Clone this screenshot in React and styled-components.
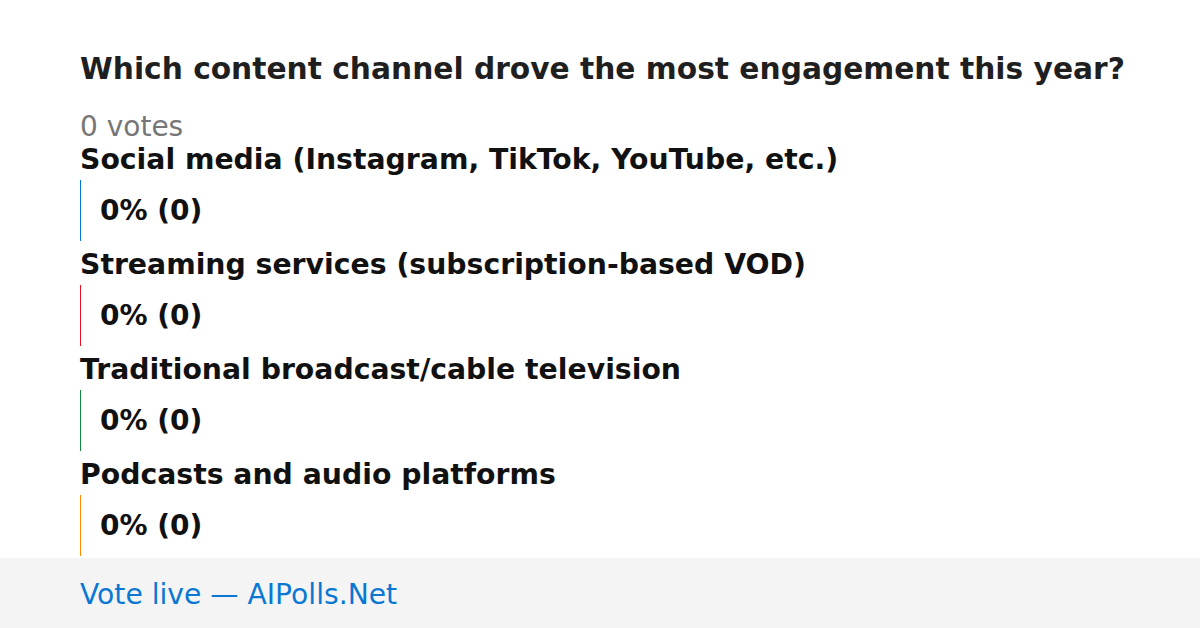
import styled, { createGlobalStyle } from "styled-components";

const options = [
  { label: "Social media (Instagram, TikTok, YouTube, etc.)", color: "#0078d4", pct: 0, count: 0 },
  { label: "Streaming services (subscription-based VOD)", color: "#e81123", pct: 0, count: 0 },
  { label: "Traditional broadcast/cable television", color: "#10893e", pct: 0, count: 0 },
  { label: "Podcasts and audio platforms", color: "#ff8c00", pct: 0, count: 0 },
];

export default function App() {
  return (
    <>
      <GlobalStyle />
      <Page>
        <Main>
          <Title>Which content channel drove the most engagement this year?</Title>
          <Votes>0 votes</Votes>
          <OptionList>
            {options.map((opt) => (
              <Option key={opt.label}>
                <Label>{opt.label}</Label>
                <Bar color={opt.color}>
                  {opt.pct}% ({opt.count})
                </Bar>
              </Option>
            ))}
          </OptionList>
        </Main>
        <Footer>
          <FooterLink>Vote live — AIPolls.Net</FooterLink>
        </Footer>
      </Page>
    </>
  );
}

const GlobalStyle = createGlobalStyle`
  *, *::before, *::after {
    box-sizing: border-box;
  }
  html, body {
    margin: 0;
    padding: 0;
    background: #ffffff;
  }
  body {
    font-family: "DejaVu Sans", "Liberation Sans", sans-serif;
  }
`;

const Page = styled.div`
  width: 1200px;
  height: 628px;
  display: flex;
  flex-direction: column;
  overflow: hidden;
`;

const Main = styled.div`
  flex: 1;
  display: flex;
  flex-direction: column;
  padding: 51px 80px 0;
`;

const Title = styled.h1`
  margin: 0;
  font-size: 29.7px;
  line-height: 36px;
  font-weight: bold;
  color: #1f1f1f;
  white-space: nowrap;
`;

const Votes = styled.div`
  margin-top: 23px;
  font-size: 28px;
  line-height: 34px;
  color: #767676;
`;

const OptionList = styled.div`
  display: flex;
  flex-direction: column;
  gap: 8px;
`;

const Option = styled.div`
  display: flex;
  flex-direction: column;
`;

const Label = styled.div`
  font-size: 28.3px;
  line-height: 32px;
  font-weight: bold;
  color: #111111;
  margin-bottom: 4px;
  white-space: nowrap;
`;

const Bar = styled.div`
  height: 61px;
  display: flex;
  align-items: center;
  border-left: 1px solid ${({ color }) => color};
  padding-left: 19px;
  font-size: 28px;
  font-weight: bold;
  color: #111111;
`;

const Footer = styled.div`
  height: 70px;
  flex-shrink: 0;
  background: #f4f4f4;
  display: flex;
  align-items: center;
  padding: 3px 80px 0;
`;

const FooterLink = styled.span`
  font-size: 28.2px;
  color: #0a78d2;
`;
